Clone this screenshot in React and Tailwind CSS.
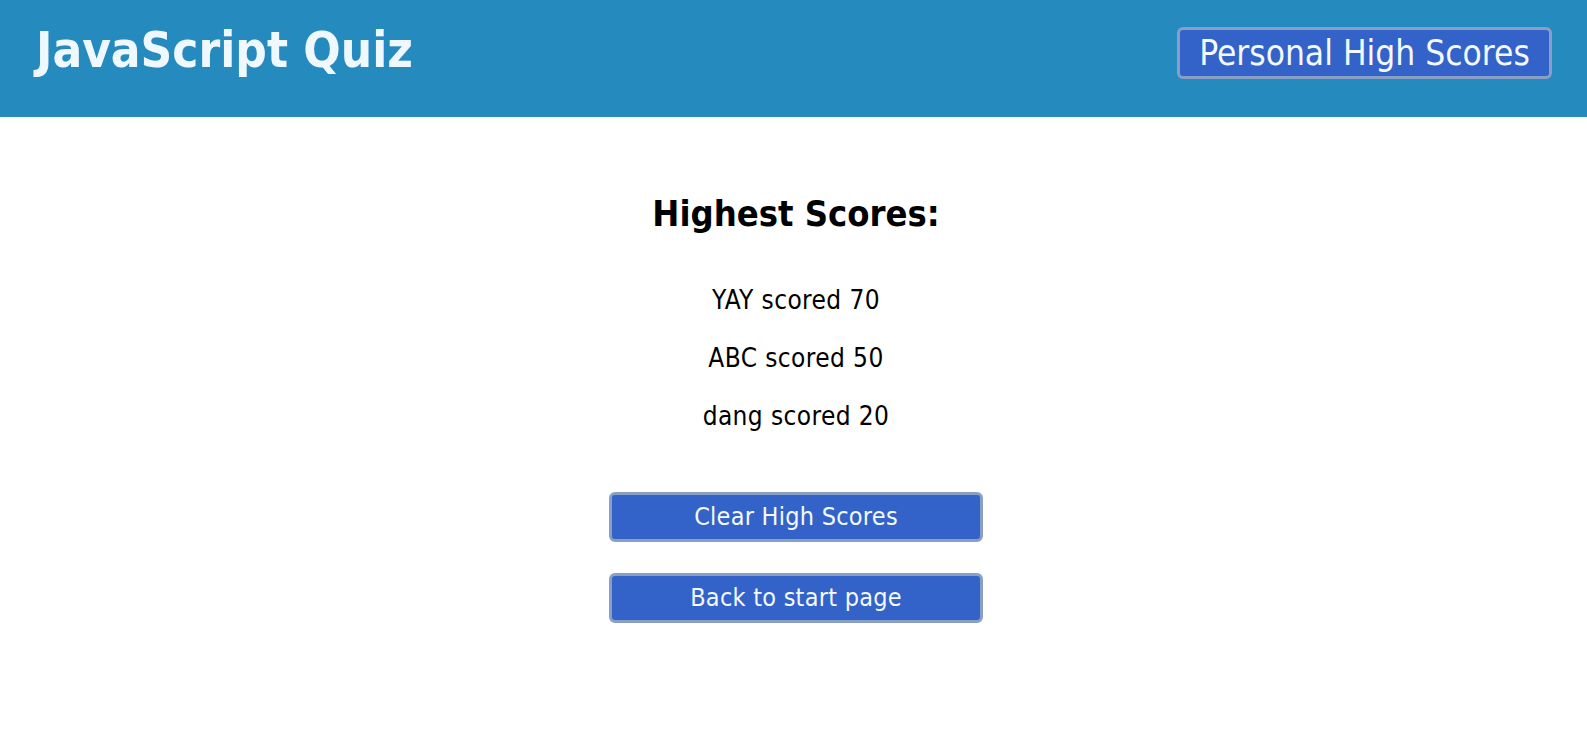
export default function App() {
  return (
    <div className="min-h-[732px] bg-white font-[DejaVu_Sans_Condensed,DejaVu_Sans,sans-serif] font-stretch-semi-condensed">
      <header className="flex h-[117px] items-start justify-between bg-[#258abd] pl-[36px] pr-[35px]">
        <h1 className="mt-[26px] text-[49px] font-bold leading-[49px] text-[#f0f8ff]">JavaScript Quiz</h1>
        <button className="mt-[27px] flex h-[52px] w-[375px] items-center justify-center rounded-[6px] border-[3px] border-[#8a9fc5] bg-[#3362c9] text-[35px] leading-[46px] text-[#f4f9ff]">
          Personal High Scores
        </button>
      </header>
      <main className="flex flex-col items-center pl-[5px] pt-[75px]">
        <h2 className="text-[36px] font-bold leading-[44px] text-black">Highest Scores:</h2>
        <ul className="mt-[35px] flex flex-col items-center">
          <li className="text-[26px] leading-[58px] tracking-[0.4px] text-black">YAY scored 70</li>
          <li className="text-[26px] leading-[58px] tracking-[0.4px] text-black">ABC scored 50</li>
          <li className="text-[26px] leading-[58px] tracking-[0.4px] text-black">dang scored 20</li>
        </ul>
        <button className="mt-[47px] flex h-[50px] w-[374px] items-center justify-center rounded-[6px] border-[3px] border-[#8a9fc5] bg-[#3362c9] text-[25px] leading-[44px] tracking-[0.25px] text-[#f4f9ff]">
          Clear High Scores
        </button>
        <button className="mt-[31px] flex h-[50px] w-[374px] items-center justify-center rounded-[6px] border-[3px] border-[#8a9fc5] bg-[#3362c9] text-[25px] leading-[44px] tracking-[0.25px] text-[#f4f9ff]">
          Back to start page
        </button>
      </main>
    </div>
  );
}
